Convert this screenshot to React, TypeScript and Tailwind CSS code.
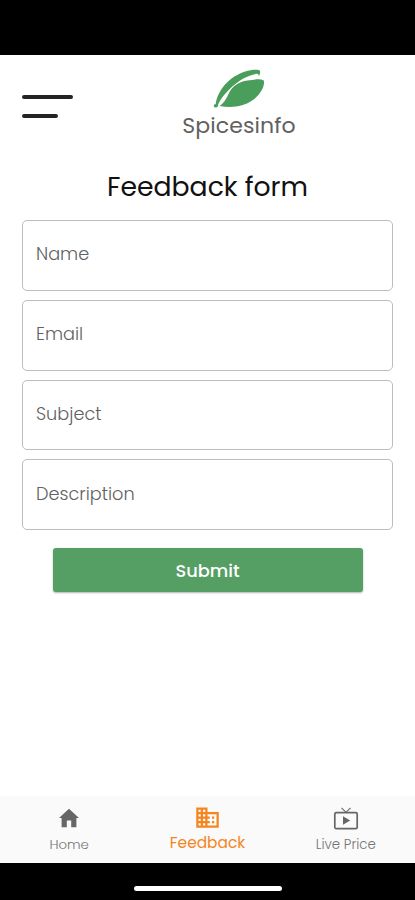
import { MdBusiness } from "react-icons/md"

interface Field {
    id: number
    label: string
}

const fields: Field[] = [
    { id: 1, label: "Name" },
    { id: 2, label: "Email" },
    { id: 3, label: "Subject" },
    { id: 4, label: "Description" }
]

const Leaf = () => (
    <svg className="w-[52px] h-10" viewBox="0 0 52 40" fill="#4a9e5b">
        <path d="M2.6 35.2C4 24.5 11.5 14 21 7.8C29.5 2.2 39 0 45.8 0.9C47.8 1.4 47.4 4.4 45.8 7.6C45.9 5.6 45.2 4.8 43.6 4.8C35 6 26.5 11 18.5 18.2C12 24.3 7.5 30 5.2 35.2C5.5 37 4.4 38.5 2.8 38.6C1.4 38.6 0.6 37.6 0.8 36.4C1 35.5 1.7 35.1 2.6 35.2Z" />
        <path d="M6.6 37C10.5 34 13.2 30.5 15.5 25C19 17.3 26 12.8 34.5 11.6C41.5 10.8 46.5 9.4 50.8 11.4C52.2 17 47.5 25.5 39.5 31.3C31 37.5 19 39.3 6.6 37Z" />
    </svg>
)

const HomeIcon = () => (
    <svg className="w-6 h-6" viewBox="0 0 24 24" fill="#666666">
        <path d="M12 2.8L2 12.1H4.6V21.3H9.8V14.6H14.2V21.3H19.4V12.1H22Z" />
    </svg>
)

const LiveIcon = () => (
    <svg className="w-[26px] h-[26px]" viewBox="0 0 26 26" fill="none" stroke="#666666">
        <rect x="1.8" y="6.6" width="22.4" height="16" rx="1.4" strokeWidth="1.7" />
        <path d="M8.5 1.8L13 6.3L17.5 1.8" strokeWidth="1.1" />
        <path d="M10 10.2V18.8L17.2 14.5Z" fill="#666666" stroke="none" />
    </svg>
)

const Header = () => (
    <header className="h-[109px] flex flex-row items-start px-[22px]">
        <div className="w-[51px] mt-10 flex flex-col gap-[15px] cursor-pointer">
            <div className="h-1 w-[51px] rounded-full bg-[#242424]" />
            <div className="h-1 w-9 rounded-full bg-[#242424]" />
        </div>
        <div className="ml-[86px] mt-3.5 w-[160px] flex flex-col items-center">
            <Leaf />
            <div className="pt-px text-[22px] leading-8 tracking-[0.1px] text-[#616161]">Spicesinfo</div>
        </div>
    </header>
)

const BottomNav = () => (
    <nav className="h-[67px] grid grid-cols-3 bg-[#fafafa] text-[#757575]">
        <div className="flex flex-col items-center pt-2.5 cursor-pointer">
            <HomeIcon />
            <div className="mt-1.5 text-[13.3px] leading-[18px] font-light">Home</div>
        </div>
        <div className="flex flex-col items-center pt-2 text-[#f5861f] cursor-pointer">
            <MdBusiness className="size-[27px]" />
            <div className="mt-[3px] text-[15.4px] leading-[18px]">Feedback</div>
        </div>
        <div className="flex flex-col items-center pt-2.5 cursor-pointer">
            <LiveIcon />
            <div className="mt-1 text-[13.4px] leading-[18px] font-light">Live Price</div>
        </div>
    </nav>
)

const App = () => {
    return (
        <div className="h-[900px] w-[415px] flex flex-col bg-white overflow-hidden font-[Poppins,Inter,sans-serif]">
            <div className="h-[55px] bg-black" />
            <Header />

            <main className="flex-1 flex flex-col px-[22px] border-t border-transparent">
                <h1 className="h-[55px] pt-1 text-center text-[26.7px] leading-9 text-[#111111]">Feedback form</h1>

                <div className="flex flex-col gap-[9px]">
                    {fields.map((field) => (
                        <div key={field.id} className="h-[70.75px] flex items-center rounded-[5px] border border-[#bdbdbd] px-[13px] pb-0.5">
                            <div className="text-[17.7px] leading-6 font-light text-[#616161]">{field.label}</div>
                        </div>
                    ))}
                </div>

                <button className="mt-[18px] mx-auto h-11 w-[310px] pt-px rounded-[3px] bg-[#559e64] shadow-[0_1px_2px_rgba(0,0,0,0.3)] text-[17.8px] leading-6 font-medium text-white cursor-pointer">
                    Submit
                </button>
            </main>

            <BottomNav />
            <div className="h-[37px] flex justify-center pt-[23px] bg-black">
                <div className="h-[5px] w-[148px] rounded-full bg-white" />
            </div>
        </div>
    )
}

export default App
